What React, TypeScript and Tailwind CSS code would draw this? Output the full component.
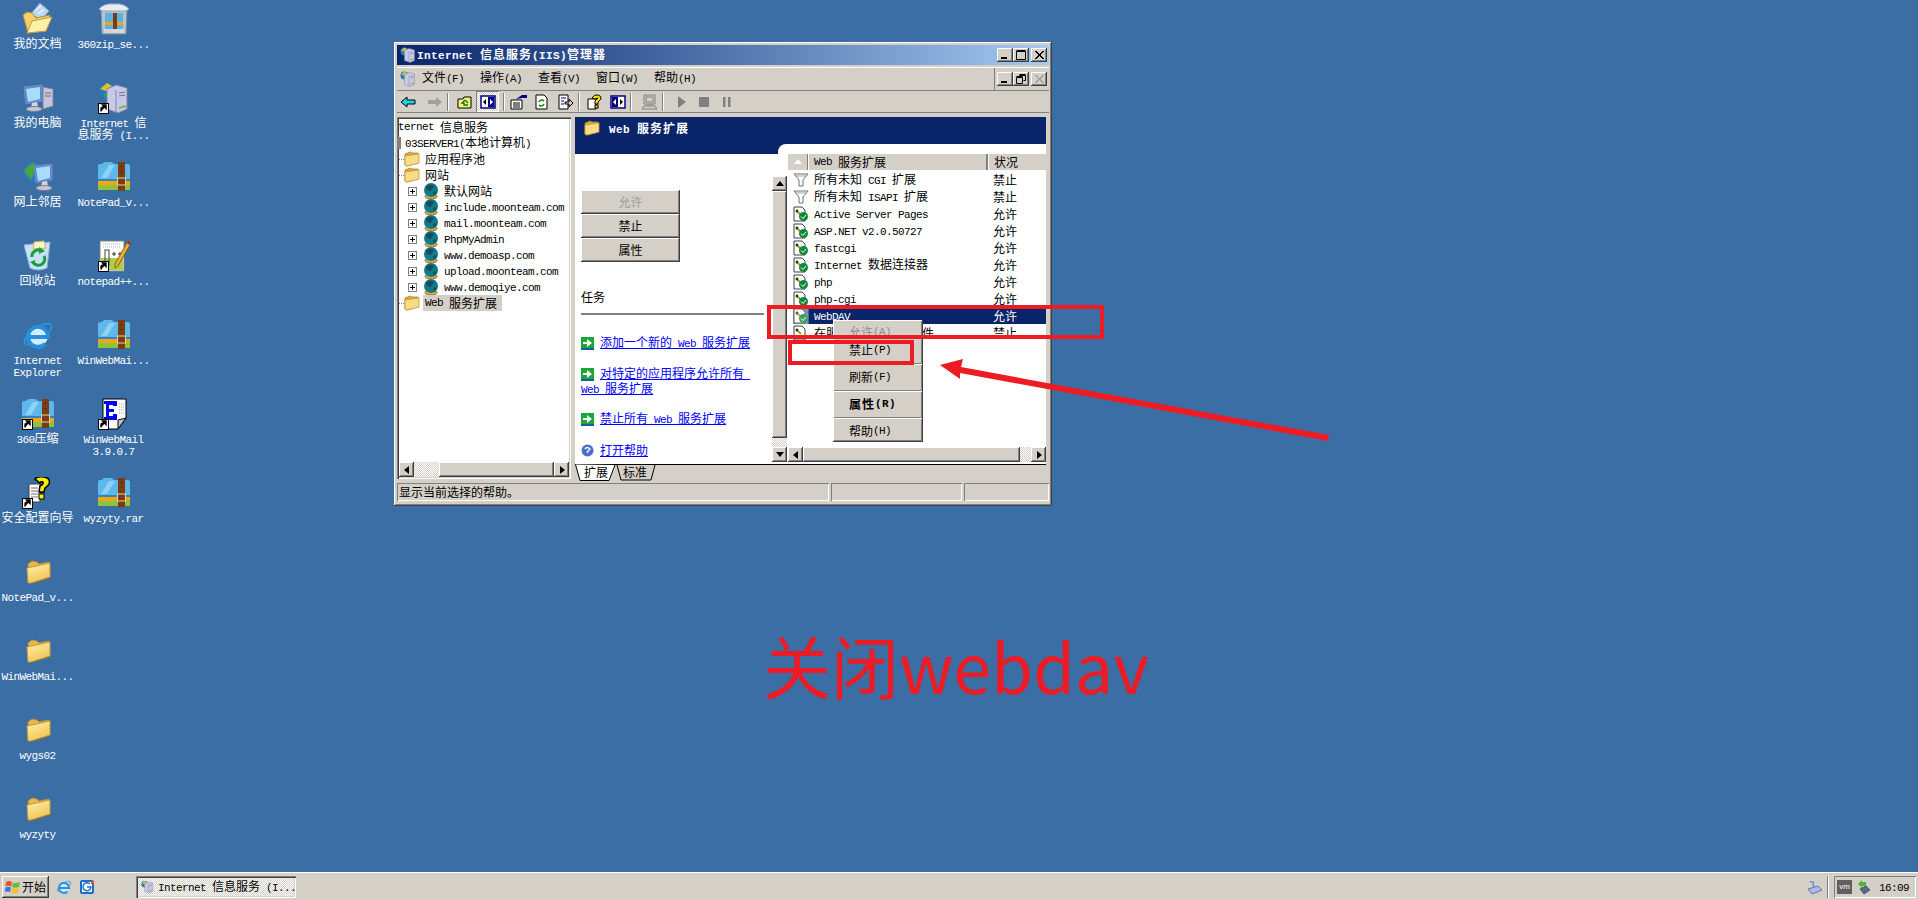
import type { ReactNode } from "react";

const raised =
  "bg-[#d4d0c8] shadow-[inset_-1px_-1px_#404040,inset_1px_1px_#fff,inset_-2px_-2px_#808080,inset_2px_2px_#d4d0c8]";
const sunken =
  "shadow-[inset_1px_1px_#808080,inset_2px_2px_#404040,inset_-1px_-1px_#fff,inset_-2px_-2px_#d4d0c8]";
const thin = "shadow-[inset_1px_1px_#808080,inset_-1px_-1px_#fff]";
const dither =
  "bg-[repeating-conic-gradient(#d4d0c8_0%_25%,#fff_0%_50%)] bg-size-[2px_2px]";

// SimSun look: half width latin, full width CJK
function T({ s, bold }: { s: string; bold?: boolean }) {
  const parts = s.split(/([\x00-\x7f]+)/).filter(Boolean);
  return (
    <>
      {parts.map((p, i) =>
        /^[\x00-\x7f]/.test(p) ? (
          <span
            key={i}
            className={
              bold
                ? "whitespace-pre font-['Liberation_Mono',monospace] text-[11px] font-bold tracking-[0.4px]"
                : "whitespace-pre font-['Liberation_Mono',monospace] text-[11px] tracking-[-0.6px]"
            }
          >
            {p}
          </span>
        ) : (
          <span key={i} className={bold ? "text-[12px] font-bold tracking-[1px]" : "text-[12px]"}>
            {p}
          </span>
        ),
      )}
    </>
  );
}

/* ---------- desktop icons ---------- */

function Shortcut() {
  return (
    <svg viewBox="0 0 11 11" className="absolute bottom-0 left-0 h-[11px] w-[11px]">
      <rect x="0.5" y="0.5" width="10" height="10" fill="#fff" stroke="#000" />
      <path d="M3 8.5 V6 Q3 4 5.5 4 M4.5 2 L8 2 L8 5.5 Z M3.5 7 L7 3" stroke="#000" strokeWidth="1.4" fill="#000" />
    </svg>
  );
}

function Folder({ size = 32 }: { size?: number }) {
  return (
    <svg viewBox="0 0 32 32" width={size} height={size}>
      <defs>
        <linearGradient id="fold" x1="0" y1="0" x2="0.5" y2="1">
          <stop offset="0" stopColor="#fff2b0" />
          <stop offset="1" stopColor="#f2c554" />
        </linearGradient>
      </defs>
      <path d="M6 8 L10 5 L15 6 L17 8 L27 6 L27 20 L8 26 Z" fill="#e8b84c" stroke="#b88f36" />
      <path d="M5 12 L28 7 L28 21 L9 27 L6 27 Z" fill="url(#fold)" stroke="#c49a3c" />
      <path d="M9 28 L29 22" stroke="#8a6d2c" strokeOpacity="0.6" />
    </svg>
  );
}

function TreeFolder() {
  return (
    <svg viewBox="0 0 16 16" width={16} height={16}>
      <path d="M1 3 L6 1 L8 2 L14 2 V12 L3 15 L1 14 Z" fill="#e0a83c" stroke="#a88430" strokeWidth="0.8" />
      <path d="M1 5 L15 3 V12 L3 15 L1 14 Z" fill="#f9dc84" stroke="#c49a3c" strokeWidth="0.8" />
    </svg>
  );
}

function DocsFolder() {
  return (
    <svg viewBox="0 0 32 32" width={32} height={32}>
      <path d="M8 12 L18 0 L27 8 L20 16 Z" fill="#bcd8f4" stroke="#7ea6d6" />
      <path d="M13 8 L19 3 M16 11 L22 6" stroke="#fff" />
      <path d="M1 12 L5 9 L10 10 L14 15 L28 12 L24 28 L6 30 Z" fill="#f5d06a" stroke="#b88f36" />
      <path d="M5 30 L10 18 L30 14 L24 28 Z" fill="#fff0a8" stroke="#c49a3c" />
    </svg>
  );
}

function ZipIcon() {
  return (
    <svg viewBox="0 0 32 32" width={32} height={32}>
      <path d="M0 5 Q0 3 2 3 L4 3 L6 1 L14 1 L16 3 L30 3 Q32 3 32 5 L32 20 L0 20 Z" fill="#5db8ec" />
      <path d="M3 17 L11 4 L17 4 L9 17 Z" fill="#8fd0f5" />
      <rect x="0" y="18" width="32" height="2" fill="#2a86cc" />
      <rect x="0" y="20" width="32" height="4" fill="#f8a312" />
      <rect x="0" y="24" width="32" height="5" fill="#8cc43c" />
      <rect x="20" y="1" width="7" height="29" fill="#7a3c14" />
      <rect x="19.5" y="17" width="8" height="7" fill="none" stroke="#e4d6a0" />
      <path d="M23.5 5 V8 M23.5 10 V12" stroke="#2a1406" strokeDasharray="1 2" />
    </svg>
  );
}

function ZipBoxIcon() {
  return (
    <svg viewBox="0 0 32 32" width={32} height={32}>
      <path d="M3 7 L29 7 L28 31 L4 31 Z" fill="#b4c4d0" stroke="#7d8c98" />
      <rect x="7" y="10" width="18" height="16" fill="#5db0e0" />
      <rect x="7" y="19" width="18" height="3" fill="#f8a312" />
      <rect x="15" y="10" width="4" height="16" fill="#7a3c14" />
      <rect x="6" y="26" width="20" height="4" fill="#d0d8de" />
      <path d="M1 6 Q6 0 16 1 Q26 0 31 6 L28 8 L4 8 Z" fill="#e4eef4" stroke="#90a4b0" />
    </svg>
  );
}

function Monitor({ x = 0, y = 0 }: { x?: number; y?: number }) {
  return (
    <g transform={`translate(${x} ${y})`}>
      <path d="M1 3 L19 1 L19 17 L3 20 Z" fill="#5a8ae0" stroke="#7c8aa8" />
      <path d="M3 5 L17 3 L17 15 L5 18 Z" fill="#a8dcfc" />
      <path d="M9 19 L14 18 L15 23 L8 24 Z" fill="#d4d4dc" />
      <ellipse cx="11" cy="25" rx="8" ry="2.5" fill="#c4c4d4" stroke="#7c7c94" />
    </g>
  );
}

function ComputerIcon() {
  return (
    <svg viewBox="0 0 32 32" width={32} height={32}>
      <path d="M21 5 L31 7 L31 24 L21 27 Z" fill="#c4c4dc" stroke="#8080a0" />
      <path d="M23 11 H29 M23 14 H29" stroke="#70708c" />
      <Monitor x={1} y={2} />
    </svg>
  );
}

function GlobeArt({ cx, cy, r }: { cx: number; cy: number; r: number }) {
  return (
    <g>
      <circle cx={cx} cy={cy} r={r} fill="#2a7ac8" />
      <path
        d={`M${cx - r + 1} ${cy - 1} Q${cx - 2} ${cy - r} ${cx + 2} ${cy - r + 1} L${cx + 1} ${cy + 1} L${cx - 2} ${cy + r - 2} Z`}
        fill="#48a83c"
      />
    </g>
  );
}

function NetworkIcon() {
  return (
    <svg viewBox="0 0 32 32" width={32} height={32}>
      <GlobeArt cx={11} cy={11} r={10} />
      <Monitor x={11} y={2} />
    </svg>
  );
}

function RecycleIcon() {
  return (
    <svg viewBox="0 0 32 32" width={32} height={32}>
      <path d="M2 5 L28 2 L25 28 Q16 32 8 28 Z" fill="#c8e0f8" stroke="#8cb0dc" />
      <path d="M12 2 L22 1 L24 8 L11 9 Z" fill="#fff4c8" stroke="#c8b070" />
      <path d="M19 11 A6 6 0 0 0 10 17 M11 22 A6 6 0 0 0 22 16" stroke="#18a038" strokeWidth="3" fill="none" />
      <path d="M17 7 L23 11 L17 14 Z M13 20 L8 22 L13 26 Z" fill="#18a038" />
    </svg>
  );
}

function IeIcon({ size = 32 }: { size?: number }) {
  return (
    <svg viewBox="0 0 32 32" width={size} height={size}>
      <ellipse cx="16" cy="15" rx="16" ry="6" transform="rotate(-35 16 15)" fill="none" stroke="#2a9ae0" strokeWidth="1.5" />
      <circle cx="16" cy="17" r="10" fill="#d4eeff" />
      <path d="M7 18 H26 A10 10 0 1 0 23 25" fill="none" stroke="#2590e0" strokeWidth="4" />
    </svg>
  );
}

function IisIcon({ size = 32 }: { size?: number }) {
  return (
    <svg viewBox="0 0 32 32" width={size} height={size}>
      <circle cx="9" cy="9" r="8" fill="#1f7ac8" />
      <path d="M2 7 L9 1 L14 4 L8 9 Z" fill="#e0c020" />
      <path d="M6 12 L11 9 L12 15 L7 16 Z" fill="#38a030" />
      <path d="M9 7 L18 3 L29 6 L29 27 L20 31 L9 27 Z" fill="#c8c8e8" stroke="#8484a8" />
      <path d="M18 8 L18 30" stroke="#8484a8" />
      <path d="M21 11 L27 10 M21 14 L27 13" stroke="#6c6c8c" />
      <path d="M21 26 L28 24" stroke="#70c040" strokeWidth="2" />
    </svg>
  );
}

function NotepadIcon() {
  return (
    <svg viewBox="0 0 32 32" width={32} height={32}>
      <rect x="2" y="1" width="24" height="30" fill="#fff" stroke="#808080" />
      <path d="M3 18 H25 V30 H3 Z" fill="#a8d048" />
      <path d="M5 4 H22 M5 7 H22" stroke="#b0b0b0" strokeDasharray="1 1" />
      <rect x="7" y="10" width="4" height="15" fill="none" stroke="#404040" />
      <path d="M14 14 H18 M16 12 V16 M20 14 H24 M22 12 V16" stroke="#303030" />
      <path d="M30 1 L33 3 L20 26 L17 28 L17 24 Z" fill="#f0b030" stroke="#8a6010" />
      <path d="M30 1 L33 3 L32 5 L29 3 Z" fill="#a02020" />
    </svg>
  );
}

function WwmIcon() {
  return (
    <svg viewBox="0 0 32 32" width={32} height={32}>
      <path d="M5 1 H28 V20 L20 31 H5 Z" fill="#fff" stroke="#000" />
      <path d="M28 20 L20 22 L20 31 Z" fill="#c0c0c0" stroke="#000" />
      <path d="M6 3 H19 V8 H15 V7 H11 V11 H16 V14 H11 V18 H15 V16 H19 V22 H6 V19 H8 V6 H6 Z" fill="#0000f0" />
      <path d="M21 6 H26 M21 9 H26 M21 12 H26 M21 15 H26" stroke="#a0a0a0" strokeDasharray="1 1" />
    </svg>
  );
}

function WizardIcon() {
  return (
    <svg viewBox="0 0 32 32" width={32} height={32}>
      <path d="M7 7 H18 V25 H7 Z" fill="#fff" stroke="#404040" />
      <path d="M9 11 H16 M9 14 H16 M9 17 H16 M9 20 H16" stroke="#707070" />
      <path d="M13 2 Q15 -1 22 0 Q29 1 27 7 Q26 9 23 11 L22 15 H17 L18 9 Q22 7 21 5 Q19 4 18 6 Z" fill="#f8f000" stroke="#000" strokeWidth="1.5" />
      <rect x="17" y="17" width="5" height="5" fill="#f8f000" stroke="#000" />
    </svg>
  );
}

const col1: { icon: ReactNode; label: string[]; link?: boolean }[] = [
  { icon: <DocsFolder />, label: ["我的文档"] },
  { icon: <ComputerIcon />, label: ["我的电脑"] },
  { icon: <NetworkIcon />, label: ["网上邻居"] },
  { icon: <RecycleIcon />, label: ["回收站"] },
  { icon: <IeIcon />, label: ["Internet", "Explorer"] },
  { icon: <ZipIcon />, label: ["360压缩"], link: true },
  { icon: <WizardIcon />, label: ["安全配置向导"], link: true },
  { icon: <Folder />, label: ["NotePad_v..."] },
  { icon: <Folder />, label: ["WinWebMai..."] },
  { icon: <Folder />, label: ["wygs02"] },
  { icon: <Folder />, label: ["wyzyty"] },
];

const col2: { icon: ReactNode; label: string[]; link?: boolean }[] = [
  { icon: <ZipBoxIcon />, label: ["360zip_se..."] },
  { icon: <IisIcon />, label: ["Internet 信", "息服务 (I..."], link: true },
  { icon: <ZipIcon />, label: ["NotePad_v..."] },
  { icon: <NotepadIcon />, label: ["notepad++..."], link: true },
  { icon: <ZipIcon />, label: ["WinWebMai..."] },
  { icon: <WwmIcon />, label: ["WinWebMail", "3.9.0.7"], link: true },
  { icon: <ZipIcon />, label: ["wyzyty.rar"] },
];

function DesktopItem({ icon, label, link }: { icon: ReactNode; label: string[]; link?: boolean }) {
  return (
    <div className="flex h-[79px] w-[75px] flex-col items-center pt-[3px] text-white">
      <div className="relative h-8 w-8">
        {icon}
        {link && <Shortcut />}
      </div>
      <div className="mt-[2px] text-center leading-[12px]">
        {label.map((l) => (
          <div key={l} className="h-3 whitespace-nowrap">
            <T s={l} />
          </div>
        ))}
      </div>
    </div>
  );
}

/* ---------- small window parts ---------- */

function Tri({ dir, color = "#000" }: { dir: "up" | "down" | "left" | "right"; color?: string }) {
  const pts = {
    up: "4,1 8,6 0,6",
    down: "0,1 8,1 4,6",
    left: "6,0 6,8 1,4",
    right: "2,0 2,8 7,4",
  }[dir];
  return (
    <svg viewBox="0 0 8 8" width={8} height={8}>
      <polygon points={pts} fill={color} />
    </svg>
  );
}

function ScrollBtn({ dir }: { dir: "up" | "down" | "left" | "right" }) {
  return (
    <div className={`flex h-[15px] w-[15px] shrink-0 items-center justify-center ${raised}`}>
      <Tri dir={dir} />
    </div>
  );
}

function CapBtn({ kind, off }: { kind: "min" | "max" | "close" | "restore"; off?: boolean }) {
  const stroke = off ? "#a0a0a0" : "#000";
  return (
    <div className={`flex h-[14px] w-4 items-center justify-center ${raised}`}>
      <svg viewBox="0 0 16 14" width={16} height={14}>
        {kind === "min" && <rect x="4" y="9" width="6" height="2" fill={stroke} />}
        {kind === "max" && <path d="M3.5 3.5 H12.5 V11.5 H3.5 Z M3.5 2.5 H12.5" fill="none" stroke={stroke} />}
        {kind === "close" && <path d="M4 3 L12 11 M5 3 L13 11 M12 3 L4 11 M13 3 L5 11" stroke={stroke} />}
        {kind === "restore" && (
          <path d="M6.5 3.5 H12.5 V8.5 H10.5 M6.5 2.5 H12.5 M6.5 3.5 V5.5 M3.5 5.5 H9.5 V11.5 H3.5 Z M3.5 4.5 H9.5" fill="none" stroke={stroke} />
        )}
      </svg>
    </div>
  );
}

function Sep() {
  return <div className="mx-[4px] h-[18px] w-[2px] border-x border-r-white border-l-[#808080]" />;
}

function Tool({ w = 16, children, className = "" }: { w?: number; children: ReactNode; className?: string }) {
  return (
    <svg viewBox={`0 0 ${w} 16`} width={w} height={16} className={className}>
      {children}
    </svg>
  );
}

function Toolbar() {
  return (
    <div className="flex h-[22px] items-center border-b border-[#808080] pl-[3px]">
      <Tool>
        <path d="M1 8 L7 3 V6 H15 V10 H7 V13 Z" fill="#18d8e8" stroke="#000" />
      </Tool>
      <Tool className="ml-[11px]">
        <path d="M15 8 L9 3 V6 H1 V10 H9 V13 Z" fill="#a0a0a0" />
      </Tool>
      <Sep />
      <Tool className="ml-[4px]">
        <path d="M1 5 H6 L7 3 H14 V14 H1 Z" fill="#f8f080" stroke="#000" />
        <path d="M8 6 L5 9 H7 V11 H11 M8 6 L11 9" stroke="#008000" fill="none" strokeWidth="1.3" />
      </Tool>
      <div className={`ml-[3px] flex h-[21px] w-[23px] items-center justify-center ${dither} ${thin}`}>
        <Tool>
          <rect x="1" y="2" width="14" height="12" fill="#fff" stroke="#000080" strokeWidth="1.5" />
          <rect x="8" y="3" width="6" height="10" fill="#000080" />
          <path d="M6 5 V11 L3 8 Z" fill="#000" />
          <path d="M10 5 V11 L13 8 Z" fill="#fff" />
        </Tool>
      </div>
      <Sep />
      <Tool className="ml-[1px]" w={18}>
        <path d="M1 6 H12 V15 H1 Z" fill="#fff" stroke="#000" />
        <path d="M3 9 H10 M3 11 H10 M3 13 H10" stroke="#000" />
        <path d="M6 5 L12 1 H17 V4 H12" fill="#000080" />
      </Tool>
      <Tool className="ml-[7px]" w={13}>
        <path d="M1 1 H9 L12 4 V15 H1 Z" fill="#fff" stroke="#000" />
        <path d="M4 8 A3 3 0 0 1 9 7 M9 10 A3 3 0 0 1 4 11" stroke="#008000" fill="none" strokeWidth="1.4" />
      </Tool>
      <Tool className="ml-[10px]">
        <path d="M1 1 H10 V15 H1 Z" fill="#fff" stroke="#000" />
        <path d="M3 4 H8 M3 7 H6 M3 10 H6" stroke="#000080" />
        <path d="M7 8 H11 V5 L15 9 L11 13 V10 H7 Z" fill="#d4d0c8" stroke="#000" />
      </Tool>
      <Sep />
      <Tool className="ml-[3px]">
        <path d="M1 5 H9 V15 H1 Z" fill="#fff" stroke="#000" />
        <path d="M5 4 Q7 0 11 1 Q15 2 14 5 L11 8 V10 H8 V7 L11 4 L8 5 Z" fill="#f8e000" stroke="#000" />
        <rect x="8" y="11" width="3" height="3" fill="#f8e000" stroke="#000" />
      </Tool>
      <Tool className="ml-[7px]">
        <rect x="1" y="2" width="14" height="12" fill="#fff" stroke="#000080" strokeWidth="1.5" />
        <rect x="2" y="3" width="6" height="10" fill="#000080" />
        <path d="M10 5 V11 L13 8 Z" fill="#000" />
        <path d="M6 5 V11 L3 8 Z" fill="#fff" />
      </Tool>
      <Sep />
      <Tool className="ml-[5px]" w={17}>
        <path d="M3 1 H14 V10 H3 Z M7 10 V12 M10 10 V12 M1 15 L3 12 H14 L16 15 Z" fill="none" stroke="#808080" />
        <rect x="5" y="3" width="7" height="5" fill="none" stroke="#808080" />
      </Tool>
      <Sep />
      <Tool className="ml-[9px]" w={10}>
        <path d="M1 2 L9 8 L1 14 Z" fill="#808080" />
      </Tool>
      <Tool className="ml-[11px]" w={11}>
        <rect x="1" y="3" width="10" height="10" fill="#808080" />
      </Tool>
      <Tool className="ml-[13px]" w={10}>
        <path d="M1 3 H3.5 V13 H1 Z M6 3 H8.5 V13 H6 Z" fill="#808080" />
      </Tool>
    </div>
  );
}

/* ---------- tree ---------- */

function SiteGlobe() {
  return (
    <svg viewBox="0 0 16 16" width={16} height={16}>
      <ellipse cx="8" cy="13.5" rx="6" ry="2.5" fill="#e8b040" stroke="#604010" strokeWidth="0.7" />
      <circle cx="8" cy="7" r="7" fill="#0e7c86" />
      <path d="M3 3 Q8 0 11 3 L8 8 L4 7 Z M10 9 L14 8 L11 13 Z" fill="#1f4a58" />
    </svg>
  );
}

function PlusBox() {
  return (
    <div className="relative h-[9px] w-[9px] border border-[#808080] bg-white">
      <div className="absolute top-[3px] left-[1px] h-px w-[5px] bg-black" />
      <div className="absolute top-[1px] left-[3px] h-[5px] w-px bg-black" />
    </div>
  );
}

function FolderRow({ label, selected }: { label: string; selected?: boolean }) {
  return (
    <div className="flex h-4 items-center pl-[2px]">
      <div className="w-[5px] border-t border-dotted border-[#808080]" />
      <TreeFolder />
      <div className={selected ? "ml-[3px] flex h-4 w-[79px] items-center bg-[#d4d0c8] pl-[2px]" : "ml-[5px]"}>
        <T s={label} />
      </div>
    </div>
  );
}

function SiteRow({ label }: { label: string }) {
  return (
    <div className="flex h-4 items-center pl-[11px]">
      <PlusBox />
      <div className="ml-[6px]">
        <SiteGlobe />
      </div>
      <div className="ml-[5px] whitespace-nowrap">
        <T s={label} />
      </div>
    </div>
  );
}

const sites = [
  "默认网站",
  "include.moonteam.com",
  "mail.moonteam.com",
  "PhpMyAdmin",
  "www.demoasp.com",
  "upload.moonteam.com",
  "www.demoqiye.com",
];

/* ---------- task pane ---------- */

function GoIcon() {
  return (
    <svg viewBox="0 0 13 13" width={13} height={13} className="shrink-0">
      <rect width="13" height="13" fill="#18a838" />
      <rect x="0" y="11" width="13" height="2" fill="#1c5a9c" />
      <path d="M2 5 H6 V2 L11 6 L6 10 V7 H2 Z" fill="#fff" />
    </svg>
  );
}

function TaskLink({ lines, help, className }: { lines: string[]; help?: boolean; className: string }) {
  return (
    <div className={`${className} leading-[14px] text-[#0000ff] underline`}>
      <div className="flex h-[14px] items-center">
        {help ? (
          <svg viewBox="0 0 13 13" width={13} height={13} className="shrink-0">
            <circle cx="6.5" cy="6.5" r="6" fill="#4c70c8" />
            <path d="M4 5 Q6 2 9 5 L6.5 7.5 V9" stroke="#fff" fill="none" strokeWidth="1.4" />
          </svg>
        ) : (
          <GoIcon />
        )}
        <span className="ml-[6px] whitespace-pre">
          <T s={lines[0]} />
        </span>
      </div>
      {lines[1] && (
        <div className="h-[14px]">
          <T s={lines[1]} />
        </div>
      )}
    </div>
  );
}

/* ---------- list ---------- */

function FilterIcon() {
  return (
    <svg viewBox="0 0 16 16" width={16} height={16}>
      <path d="M1 2 H15 L10 8 V14 L6 14 V8 Z" fill="#fff" stroke="#707070" />
      <path d="M3 4 H13" stroke="#a0a0a0" />
    </svg>
  );
}

function ExtIcon({ kind, selected }: { kind: "ok" | "off"; selected?: boolean }) {
  return (
    <svg viewBox="0 0 16 16" width={16} height={16} className={selected ? "bg-[#5a78b0] opacity-80" : ""}>
      <path d="M1 1 H9 L12 4 V15 H1 Z" fill="#fff" stroke="#404040" />
      <path d="M3 5 L6 7 L8 9" stroke="#a8a000" strokeWidth="2" />
      <circle cx="4" cy="5" r="1.4" fill="#303030" />
      {kind === "ok" && (
        <>
          <circle cx="10.5" cy="10.5" r="4.5" fill="#108838" />
          <path d="M8 10.5 L10 12.5 L13 9" stroke="#fff" fill="none" />
        </>
      )}
    </svg>
  );
}

const rows: { name: string; status: string; icon: "filter" | "ok" | "off"; selected?: boolean }[] = [
  { name: "所有未知 CGI 扩展", status: "禁止", icon: "filter" },
  { name: "所有未知 ISAPI 扩展", status: "禁止", icon: "filter" },
  { name: "Active Server Pages", status: "允许", icon: "ok" },
  { name: "ASP.NET v2.0.50727", status: "允许", icon: "ok" },
  { name: "fastcgi", status: "允许", icon: "ok" },
  { name: "Internet 数据连接器", status: "允许", icon: "ok" },
  { name: "php", status: "允许", icon: "ok" },
  { name: "php-cgi", status: "允许", icon: "ok" },
  { name: "WebDAV", status: "允许", icon: "ok", selected: true },
  { name: "在服务器端的包含文件", status: "禁止", icon: "off" },
];

function ListRow({ row }: { row: (typeof rows)[number] }) {
  return (
    <div className="flex h-[17px] items-center">
      <div className="ml-[5px] w-[15px] shrink-0">
        {row.icon === "filter" ? <FilterIcon /> : <ExtIcon kind={row.icon} selected={row.selected} />}
      </div>
      <div
        className={
          row.selected
            ? "grid h-[17px] flex-1 grid-cols-[185px_1fr] items-center bg-[#0a246a] text-white"
            : "grid h-[17px] flex-1 grid-cols-[185px_1fr] items-center"
        }
      >
        <div className="whitespace-nowrap pl-[6px]">
          <T s={row.name} />
        </div>
        <div>
          <T s={row.status} />
        </div>
      </div>
    </div>
  );
}

function MenuItem({ label, disabled, bold }: { label: string; disabled?: boolean; bold?: boolean }) {
  return (
    <div className={disabled ? "flex h-[18px] items-center pl-[16px] text-[#8c8c8c]" : "flex h-[18px] items-center pl-[16px]"}>
      <T s={label} bold={bold} />
    </div>
  );
}

function MenuSep() {
  return (
    <div className="flex h-[9px] items-center px-[1px]">
      <div className="h-[2px] w-full border-y border-t-[#808080] border-b-white" />
    </div>
  );
}

function SideButton({ label, disabled }: { label: string; disabled?: boolean }) {
  return (
    <div className={`flex h-[24px] w-[99px] items-center justify-center ${raised} ${disabled ? "text-[#9c9c9c]" : ""}`}>
      <T s={label} />
    </div>
  );
}

function IisWindow() {
  return (
    <div className={`absolute top-[42px] left-[394px] flex h-[464px] w-[658px] flex-col p-[3px] text-black ${raised}`}>
      {/* title */}
      <div className="flex h-[20px] items-center justify-between bg-linear-to-r from-[#0a246a] to-[#a6caf0] pr-[2px] pl-[3px] text-white">
        <div className="flex items-center">
          <IisIcon size={16} />
          <span className="ml-[1px]">
            <T s="Internet 信息服务(IIS)管理器" bold />
          </span>
        </div>
        <div className="flex">
          <CapBtn kind="min" />
          <CapBtn kind="max" />
          <div className="ml-[2px]">
            <CapBtn kind="close" />
          </div>
        </div>
      </div>
      {/* menu */}
      <div className="mt-[2px] flex h-[24px] items-center border-y border-t-white border-b-[#808080] pl-[3px]">
        <IisIcon size={16} />
        <div className="ml-[6px] flex flex-1 pb-[2px]">
          {["文件(F)", "操作(A)", "查看(V)", "窗口(W)", "帮助(H)"].map((m) => (
            <div key={m} className="w-[58px]">
              <T s={m} />
            </div>
          ))}
        </div>
        <div className="flex h-full items-center border-l border-[#808080] pr-[2px] pl-[2px]">
          <CapBtn kind="min" />
          <CapBtn kind="restore" />
          <div className="ml-[2px]">
            <CapBtn kind="close" off />
          </div>
        </div>
      </div>
      <Toolbar />
      {/* panes */}
      <div className="mt-[4px] mr-[3px] flex h-[364px] shrink-0">
        <div className={`flex h-[362px] w-[174px] flex-col bg-white p-[2px] ${sunken}`}>
          <div className="-ml-[2px] flex-1 overflow-hidden">
            <div className="flex h-4 items-center pl-[1px] whitespace-nowrap">
              <T s="ternet 信息服务" />
            </div>
            <div className="flex h-4 items-center whitespace-nowrap">
              <div className="ml-[1px] h-3 w-[3px] bg-[#808080]" />
              <span className="ml-[4px]">
                <T s="03SERVER1(本地计算机)" />
              </span>
            </div>
            <FolderRow label="应用程序池" />
            <FolderRow label="网站" />
            {sites.map((s) => (
              <SiteRow key={s} label={s} />
            ))}
            <FolderRow label="Web 服务扩展" selected />
          </div>
          <div className="flex h-[15px] shrink-0">
            <ScrollBtn dir="left" />
            <div className={`w-[25px] ${dither}`} />
            <div className={`flex-1 ${raised}`} />
            <ScrollBtn dir="right" />
          </div>
        </div>

        <div className="ml-[4px] flex flex-1 flex-col">
          <div className="relative flex h-[347px] flex-col bg-white">
            <div className="flex h-[37px] shrink-0 items-start bg-[#0a246a] pt-[3px] pl-[9px] text-white">
              <TreeFolder />
              <span className="mt-[1px] ml-[9px]">
                <T s="Web 服务扩展" bold />
              </span>
            </div>
            <div className="absolute top-[27px] right-0 h-[12px] w-[268px] rounded-tl-[8px] bg-white" />
            <div className="relative flex min-h-0 flex-1">
              {/* tasks */}
              <div className="flex w-[197px] shrink-0 flex-col pt-[36px] pl-[6px]">
                <SideButton label="允许" disabled />
                <SideButton label="禁止" />
                <SideButton label="属性" />
                <div className="mt-[27px] flex h-4 items-center">
                  <T s="任务" />
                </div>
                <div className="mt-[8px] h-[2px] w-[183px] bg-[#808080]" />
                <TaskLink lines={["添加一个新的 Web 服务扩展"]} className="mt-[21px]" />
                <TaskLink lines={["对特定的应用程序允许所有 ", "Web 服务扩展"]} className="mt-[17px]" />
                <TaskLink lines={["禁止所有 Web 服务扩展"]} className="mt-[17px]" />
                <TaskLink lines={["打开帮助"]} help className="mt-[17px]" />
              </div>
              {/* vertical scrollbar */}
              <div className="flex w-[16px] shrink-0 flex-col pt-[22px] pb-[2px]">
                <ScrollBtn dir="up" />
                <div className={`w-[15px] flex-1 ${raised}`} />
                <div className={`h-[9px] w-[15px] ${dither}`} />
                <ScrollBtn dir="down" />
              </div>
              {/* list */}
              <div className="flex min-w-0 flex-1 flex-col pb-[2px]">
                <div className="flex h-[16px] shrink-0 bg-[#d4d0c8]">
                  <div className="flex w-[20px] items-center justify-center border-r border-[#808080]">
                    <Tri dir="up" color="#fff" />
                  </div>
                  <div className="flex w-[180px] items-center border-r-2 border-l border-r-[#808080] border-l-white pl-[5px]">
                    <T s="Web 服务扩展" />
                  </div>
                  <div className="flex flex-1 items-center border-l border-white pl-[5px]">
                    <T s="状况" />
                  </div>
                </div>
                <div className="mt-[1px] min-h-0 flex-1 overflow-hidden">
                  {rows.map((r) => (
                    <ListRow key={r.name} row={r} />
                  ))}
                </div>
                <div className="flex h-[15px] shrink-0">
                  <ScrollBtn dir="left" />
                  <div className={`flex-1 ${raised}`} />
                  <div className={`w-[11px] ${dither}`} />
                  <ScrollBtn dir="right" />
                </div>
              </div>
            </div>
          </div>
          {/* tabs */}
          <div className="relative h-[17px] border-t border-black">
            <svg viewBox="0 0 90 17" width={90} height={17} className="absolute top-[-1px] left-0">
              <path d="M42 1 L46 16 H76 L80 1" fill="#d4d0c8" stroke="#000" />
              <path d="M0.5 0.5 L5 16.5 H34 L40 1" fill="#fff" stroke="#000" />
            </svg>
            <span className="absolute top-0 left-[9px]">
              <T s="扩展" />
            </span>
            <span className="absolute top-0 left-[48px]">
              <T s="标准" />
            </span>
          </div>
        </div>
      </div>
      {/* status */}
      <div className="mt-[2px] flex h-[18px] gap-[2px]">
        <div className={`flex w-[432px] items-center pl-[2px] ${thin}`}>
          <T s="显示当前选择的帮助。" />
        </div>
        <div className={`w-[131px] ${thin}`} />
        <div className={`flex-1 ${thin}`} />
      </div>
    </div>
  );
}

function Taskbar() {
  return (
    <div className="flex h-[28px] shrink-0 items-center border-t border-white bg-[#d4d0c8] pl-[2px] text-black">
      <div className={`flex h-[22px] w-[47px] items-center pl-[3px] ${raised}`}>
        <svg viewBox="0 0 16 16" width={16} height={16}>
          <path d="M1 3 Q4 1 7 3 L6 7.5 Q3 6 0.5 7.5 Z" fill="#e8502c" />
          <path d="M8 3.5 Q11 5 15 3 L14 8 Q10 9.5 7 8 Z" fill="#6cb83c" />
          <path d="M0.5 8.5 Q3 7 6 8.5 L5 13 Q2 12 0 13 Z" fill="#3c78d8" />
          <path d="M7 9 Q10 10.5 14 9 L13 14 Q9 15 6 13.5 Z" fill="#f8c028" />
        </svg>
        <span className="ml-[1px] text-[12px]">开始</span>
      </div>
      <div className="ml-[7px]">
        <IeIcon size={16} />
      </div>
      <svg viewBox="0 0 16 16" width={16} height={16} className="ml-[7px]">
        <rect x="1" y="1" width="14" height="14" rx="2" fill="#1c6cd0" />
        <rect x="3" y="3" width="10" height="10" fill="#fff" />
        <path d="M11 5 A4 4 0 1 0 12 8 H8" fill="none" stroke="#1c6cd0" strokeWidth="1.5" />
        <rect x="12" y="2" width="3" height="3" fill="#e85020" />
      </svg>
      <div className={`ml-[41px] flex h-[22px] w-[160px] items-center pl-[5px] ${dither} ${sunken}`}>
        <IisIcon size={16} />
        <span className="ml-[4px] whitespace-nowrap">
          <T s="Internet 信息服务 (I..." />
        </span>
      </div>
      <div className="flex-1" />
      <svg viewBox="0 0 16 16" width={16} height={16}>
        <path d="M1 10 L11 7 L15 11 L5 15 Z" fill="#b0b8e8" stroke="#6870b0" />
        <path d="M3 3 Q8 2 6 6 L8 8" stroke="#6090d0" fill="none" strokeWidth="1.5" />
      </svg>
      <div className="mr-[5px] ml-[4px] h-[22px] w-[2px] border-x border-r-white border-l-[#808080]" />
      <div className={`mr-[2px] flex h-[22px] w-[82px] items-center pl-[3px] ${thin}`}>
        <span className="flex h-[14px] w-[15px] items-center justify-center bg-[#606060] font-['Liberation_Sans',sans-serif] text-[8px] text-white">
          vm
        </span>
        <svg viewBox="0 0 16 16" width={16} height={16} className="ml-[4px]">
          <path d="M2 5 L6 1 V3 H10 V7 H6 V9 Z" fill="#48b838" />
          <path d="M4 10 L10 7 L14 11 L8 15 Z" fill="#5a6a90" stroke="#303848" strokeWidth="0.7" />
        </svg>
        <span className="ml-[7px]">
          <T s="16:09" />
        </span>
      </div>
    </div>
  );
}

export default function App() {
  return (
    <div className="relative flex h-[900px] w-[1918px] flex-col overflow-hidden bg-[#3a6ea5] font-['Noto_Sans_CJK_SC','Noto_Sans',sans-serif] text-[12px] leading-[14px]">
      <div className="flex min-h-0 flex-1">
        <div className="flex flex-col">
          {col1.map((d, i) => (
            <DesktopItem key={i} {...d} />
          ))}
        </div>
        <div className="flex flex-col pl-[1px]">
          {col2.map((d, i) => (
            <DesktopItem key={i} {...d} />
          ))}
        </div>
      </div>
      <Taskbar />

      <IisWindow />

      {/* context menu */}
      <div className={`absolute top-[320px] left-[833px] h-[122px] w-[90px] pt-[3px] text-black ${raised}`}>
        <MenuItem label="允许(A)" disabled />
        <MenuItem label="禁止(P)" />
        <MenuSep />
        <MenuItem label="刷新(F)" />
        <MenuSep />
        <MenuItem label="属性(R)" bold />
        <MenuSep />
        <MenuItem label="帮助(H)" />
      </div>

      {/* red annotations */}
      <div className="absolute top-[305px] left-[767px] h-[34px] w-[337px] border-4 border-[#ed1c24]" />
      <div className="absolute top-[340px] left-[788px] h-[25px] w-[126px] border-4 border-[#ed1c24]" />
      <svg viewBox="0 0 410 100" width={410} height={100} className="absolute top-[350px] left-[930px]">
        <polygon points="10,15 33,9 31,17 399,85 398,91 30,23 30,29" fill="#ed1c24" />
      </svg>
      <div className="absolute top-[617px] left-[763px] text-[68px] leading-[96px] whitespace-nowrap text-[#ed1c24]">
        关闭webdav
      </div>
    </div>
  );
}
